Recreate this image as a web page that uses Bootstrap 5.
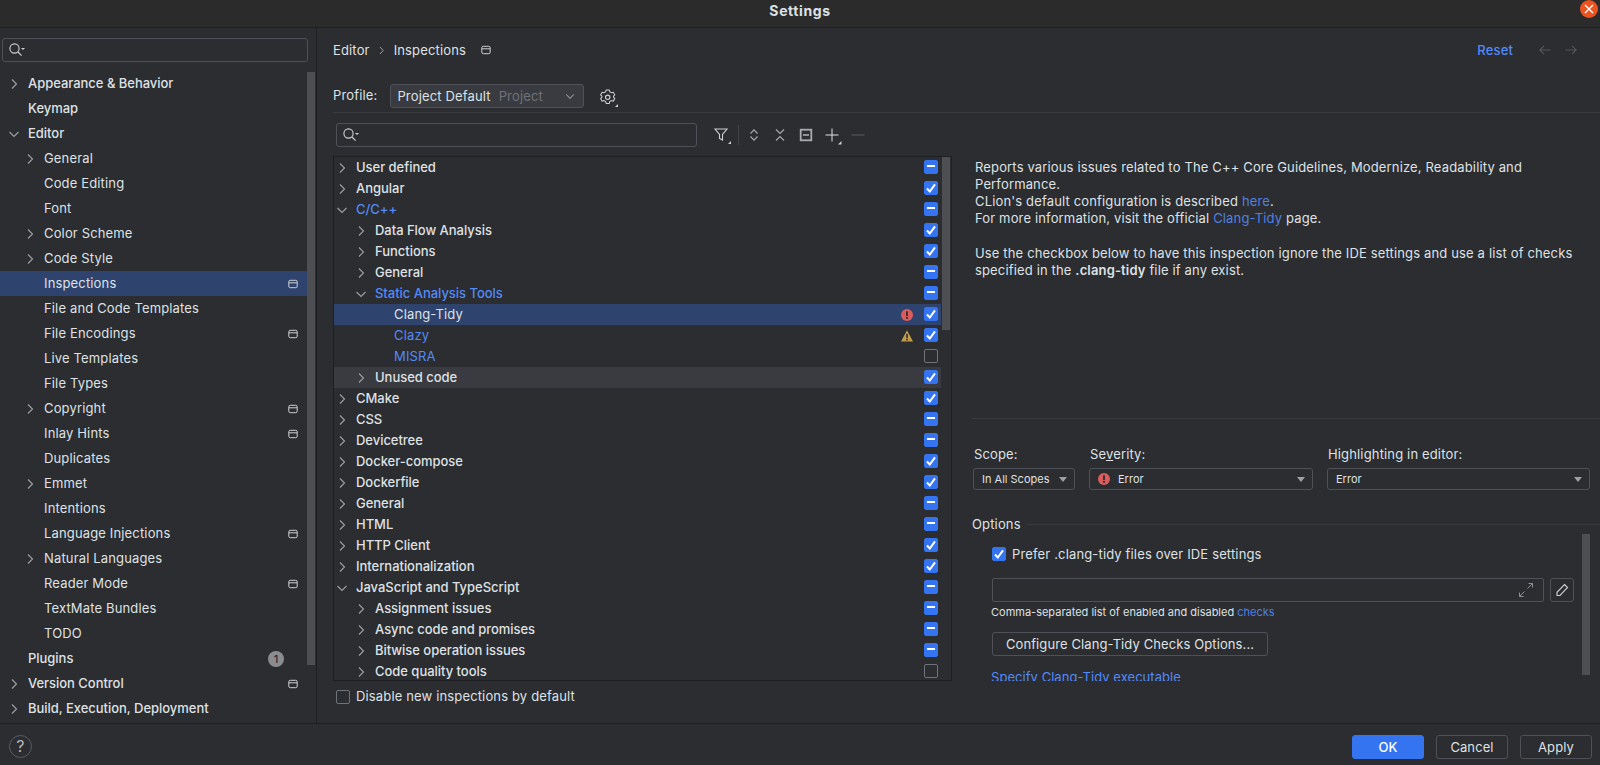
<!DOCTYPE html>
<html>
<head>
	<meta charset="UTF-8">
	<title>Settings</title>
	<link href="https://cdn.jsdelivr.net/npm/bootstrap@5.3.3/dist/css/bootstrap.min.css" rel="stylesheet">
	<script src="https://cdn.jsdelivr.net/npm/bootstrap@5.3.3/dist/js/bootstrap.bundle.min.js"></script>
	<style type="text/css">
		html, body { height: 100%; overflow: hidden; }
		body { background: #2b2d30; color: #dfe1e5; font: 13px/17px Inter, "Liberation Sans", sans-serif; letter-spacing: .15px; }
		a { color: #548af7; text-decoration: none; }
		svg { display: block; flex: none; }
		.ide-shell { height: 765px; }
		.title-bar { height: 28px; padding-bottom: 7px; background: #2b2b2b; border-bottom: 1px solid #1e1f22; font-weight: 700; font-size: 14px; letter-spacing: .6px; }
		.close-dot { position: absolute; right: 2px; top: 0; width: 18px; height: 18px; border-radius: 50%; background: #e95420; }
		.work-area { height: 695px; }
		.side-pane { width: 317px; border-right: 1px solid #1e1f22; }
		.side-search { margin: 10px 8px 9px 2px; }
		.srch-box { height: 24px; border: 1px solid #4e5157; border-radius: 3px; padding-left: 5px; }
		.side-list { height: 650px; overflow: hidden; }
		.side-row { height: 25px; padding-right: 18px; }
		.side-row.active-row { background: #2e436e; margin-right: 8px; padding-right: 10px; }
		.top-item { font-weight: 500; letter-spacing: -.03px; }
		.lvl-s0 { padding-left: 6px; }
		.lvl-s1 { padding-left: 22px; }
		.chev-slot { width: 16px; margin-right: 6px; flex: none; display: flex; justify-content: center; }
		.side-scroll { position: absolute; left: 307px; top: 1px; width: 8px; height: 593px; background: #4e4f52; }
		.count-pill { width: 16px; height: 16px; border-radius: 50%; background: #8a8c90; color: #2b2d30; font-size: 11px; line-height: 16px; text-align: center; margin-right: 14px; }
		.main-pane { min-width: 0; }
		.crumb-row { height: 44px; padding-left: 16px; padding-right: 23px; }
		.crumb-sep { margin: 0 7.5px; }
		.crumb-proj { margin-left: 15px; }
		.reset-link { margin-right: 26px; font-weight: 500; }
		.next-arrow { margin-left: 14px; }
		.profile-row { height: 41px; margin-left: 16px; padding-bottom: 4px; border-bottom: 1px solid #393b40; }
		.profile-combo { width: 194px; height: 24px; margin-left: 13px; padding: 0 7px 0 6px; border: 1px solid #4e5157; border-radius: 3px; background: #393b40; }
		.gear-ico { margin-left: 15px; }
		.dim-text { color: #6f737a; }
		.left-col { width: 635px; padding-left: 16px; flex: none; }
		.tool-row { height: 43px; padding: 10px 0 9px 3px; }
		.tool-search { width: 361px; }
		.tool-btn { width: 26px; display: flex; justify-content: center; }
		.tool-sep { width: 1px; height: 20px; background: #43454a; margin: 0 2px 0 3px; }
		.tree-box { height: 525px; border: 1px solid #1e1f22; overflow: hidden; }
		.tree-row { height: 21px; padding-right: 13px; }
		.tree-row.picked { background: #2e436e; margin-right: 10px; padding-right: 3px; }
		.tree-row.hovered { background: #393b40; margin-right: 10px; padding-right: 3px; }
		.tree-row .ij-box { margin-top: -1px; }
		.lvl-t1 { padding-left: 19px; }
		.lvl-t2 { padding-left: 38px; }
		.blue-text { color: #548af7; }
		.tree-scroll { position: absolute; left: 608px; top: 0; width: 8px; height: 173px; background: #4e4f52; }
		.stat-ico { margin-right: 11px; }
		.form-check-input.ij-box { width: 14px; height: 14px; margin-left: 0; margin-bottom: 0; border: 1px solid #6f737a; border-radius: 2px; background-color: transparent; background-size: 14px 14px; flex: none; }
		.form-check-input.ij-box:checked { background-color: #3574f0; border-color: #3574f0; background-image: url("data:image/svg+xml,%3csvg xmlns='http://www.w3.org/2000/svg' viewBox='0 0 14 14'%3e%3cpath fill='none' stroke='%23fff' stroke-width='2' d='M3 7.500 5.800 10.500 11 3.300'/%3e%3c/svg%3e"); }
		.form-check-input.ij-box:indeterminate { background-color: #3574f0; border-color: #3574f0; background-image: url("data:image/svg+xml,%3csvg xmlns='http://www.w3.org/2000/svg' viewBox='0 0 14 14'%3e%3cpath stroke='%23fff' stroke-width='2' d='M3 6h8'/%3e%3c/svg%3e"); }
		.disable-row { height: 31px; padding-left: 3px; gap: 6px; }
		.disable-row .ij-box, .opt-check .ij-box { margin-top: 0; }
		.right-col { min-width: 0; }
		.desc-block { height: 306px; margin-left: 20px; padding: 46px 20px 0 3px; border-bottom: 1px solid #393b40; }
		.desc-block p { margin: 0; }
		.desc-block a, .opt-help a { color: #5080e0; }
		.desc-gap { margin-top: 18px !important; }
		.scope-labels { height: 22.5px; margin: 26.5px 0 0 22px; }
		.scope-combos { margin-left: 21px; margin-right: 10px; }
		.ij-combo { height: 22px; border: 1px solid #4e5157; border-radius: 3px; padding: 0 7px 0 8px; font-size: 11px; letter-spacing: 0; flex: none; }
		.caret-down { width: 0; height: 0; border-left: 4.5px solid transparent; border-right: 4.5px solid transparent; border-top: 5px solid #9da0a8; }
		.scope-w { width: 102px; }
		.sev-w { width: 224px; margin-left: 14px; }
		.high-w { width: 263px; margin-left: 14px; }
		.options-head { margin: 26px 0 0 20px; gap: 6px; height: 17px; }
		.options-head i { flex: 1; height: 1px; background: #393b40; }
		.options-body { height: 147px; margin-top: 1px; overflow: hidden; padding: 13px 0 0 40px; }
		.opt-scroll { position: absolute; right: 10px; top: 0; width: 8px; height: 141px; background: #4e4f52; }
		.opt-check { gap: 6px; height: 14px; }
		.opt-input { margin-top: 17px; gap: 6px; }
		.opt-field { width: 552px; height: 24px; border: 1px solid #4e5157; border-radius: 2px; padding-right: 9px; }
		.edit-btn { width: 24px; height: 24px; border: 1px solid #4e5157; border-radius: 3px; }
		.opt-help { font-size: 11px; letter-spacing: 0; line-height: 15px; margin: 3px 0 0 -1px; }
		.ij-btn.btn { color: #dfe1e5; background: transparent; border: 1px solid #4e5157; border-radius: 3px; font-size: 13px; letter-spacing: .1px; line-height: 17px; padding: 2px 0; height: 24px; }
		.conf-btn.btn { width: 276px; margin-top: 12px; display: block; }
		.opt-link { margin: 13px 0 0 -1px; letter-spacing: .05px; }
		.foot-bar { height: 42px; border-top: 1px solid #1e1f22; padding: 11px 8px 0 9px; }
		.help-dot { width: 23px; height: 23px; border: 1px solid #5a5d63; border-radius: 50%; font-size: 16px; line-height: 21px; text-align: center; color: #b4b8bf; }
		.foot-bar .ij-btn.btn { width: 72px; margin-left: 12px; }
		.foot-bar .ok-btn.btn { background: #3574f0; border-color: #3574f0; color: #fff; font-weight: 500; }
	</style>
	<script type="text/javascript">
		window.onload = function() {
			// checkbox indeterminate 상태는 속성으로 못 줌
			document.querySelectorAll("input[data-mixed]").forEach(function(box) {
				box.indeterminate = true;
			});
		};
	</script>
</head>
<body>
	<svg width="0" height="0" style="position:absolute">
		<symbol id="ch-r" viewBox="0 0 16 16"><path d="M6 3.500 10.500 8 6 12.500" fill="none" stroke="#9da0a8" stroke-width="1.100"/></symbol>
		<symbol id="ch-d" viewBox="0 0 16 16"><path d="M3.500 6 8 10.500 12.500 6" fill="none" stroke="#9da0a8" stroke-width="1.100"/></symbol>
		<symbol id="proj" viewBox="0 0 10 10"><rect x=".8" y="1.300" width="8.400" height="7.400" rx="1.500" fill="none" stroke="#ced0d6" stroke-width="1"/><path d="M1 3.800h8" stroke="#ced0d6" stroke-width="1"/></symbol>
		<symbol id="mag" viewBox="0 0 18 16"><circle cx="6.500" cy="6.500" r="4.600" fill="none" stroke="#ced0d6" stroke-width="1.100"/><path d="M10 10l3.600 3.600" stroke="#ced0d6" stroke-width="1.100"/><path d="M13 6h4l-2 2z" fill="#ced0d6"/></symbol>
		<symbol id="err" viewBox="0 0 12 12"><circle cx="6" cy="6" r="6" fill="#db5c5c"/><rect x="5.100" y="2.300" width="1.800" height="4.800" fill="#2b2d30"/><rect x="5.100" y="8" width="1.800" height="1.800" fill="#2b2d30"/></symbol>
	</svg>

	<div class="ide-shell d-flex flex-column">
		<div class="title-bar position-relative d-flex align-items-center justify-content-center">
			Settings
			<span class="close-dot d-flex align-items-center justify-content-center">
				<svg width="10" height="10" viewBox="0 0 10 10"><path d="M1 1l8 8M9 1l-8 8" stroke="#fff" stroke-width="1.400"/></svg>
			</span>
		</div>

		<div class="work-area d-flex">
			<div class="side-pane flex-shrink-0">
				<div class="side-search srch-box d-flex align-items-center"><svg width="18" height="16"><use href="#mag"/></svg></div>
				<div class="side-list position-relative">
					<div class="side-row lvl-s0 top-item d-flex align-items-center"><span class="chev-slot"><svg width="16" height="16"><use href="#ch-r"/></svg></span>Appearance &amp; Behavior</div>
					<div class="side-row lvl-s0 top-item d-flex align-items-center"><span class="chev-slot"></span>Keymap</div>
					<div class="side-row lvl-s0 top-item d-flex align-items-center"><span class="chev-slot"><svg width="16" height="16"><use href="#ch-d"/></svg></span>Editor</div>
					<div class="side-row lvl-s1 d-flex align-items-center"><span class="chev-slot"><svg width="16" height="16"><use href="#ch-r"/></svg></span>General</div>
					<div class="side-row lvl-s1 d-flex align-items-center"><span class="chev-slot"></span>Code Editing</div>
					<div class="side-row lvl-s1 d-flex align-items-center"><span class="chev-slot"></span>Font</div>
					<div class="side-row lvl-s1 d-flex align-items-center"><span class="chev-slot"><svg width="16" height="16"><use href="#ch-r"/></svg></span>Color Scheme</div>
					<div class="side-row lvl-s1 d-flex align-items-center"><span class="chev-slot"><svg width="16" height="16"><use href="#ch-r"/></svg></span>Code Style</div>
					<div class="side-row active-row lvl-s1 d-flex align-items-center"><span class="chev-slot"></span>Inspections<svg class="ms-auto" width="10" height="10"><use href="#proj"/></svg></div>
					<div class="side-row lvl-s1 d-flex align-items-center"><span class="chev-slot"></span>File and Code Templates</div>
					<div class="side-row lvl-s1 d-flex align-items-center"><span class="chev-slot"></span>File Encodings<svg class="ms-auto" width="10" height="10"><use href="#proj"/></svg></div>
					<div class="side-row lvl-s1 d-flex align-items-center"><span class="chev-slot"></span>Live Templates</div>
					<div class="side-row lvl-s1 d-flex align-items-center"><span class="chev-slot"></span>File Types</div>
					<div class="side-row lvl-s1 d-flex align-items-center"><span class="chev-slot"><svg width="16" height="16"><use href="#ch-r"/></svg></span>Copyright<svg class="ms-auto" width="10" height="10"><use href="#proj"/></svg></div>
					<div class="side-row lvl-s1 d-flex align-items-center"><span class="chev-slot"></span>Inlay Hints<svg class="ms-auto" width="10" height="10"><use href="#proj"/></svg></div>
					<div class="side-row lvl-s1 d-flex align-items-center"><span class="chev-slot"></span>Duplicates</div>
					<div class="side-row lvl-s1 d-flex align-items-center"><span class="chev-slot"><svg width="16" height="16"><use href="#ch-r"/></svg></span>Emmet</div>
					<div class="side-row lvl-s1 d-flex align-items-center"><span class="chev-slot"></span>Intentions</div>
					<div class="side-row lvl-s1 d-flex align-items-center"><span class="chev-slot"></span>Language Injections<svg class="ms-auto" width="10" height="10"><use href="#proj"/></svg></div>
					<div class="side-row lvl-s1 d-flex align-items-center"><span class="chev-slot"><svg width="16" height="16"><use href="#ch-r"/></svg></span>Natural Languages</div>
					<div class="side-row lvl-s1 d-flex align-items-center"><span class="chev-slot"></span>Reader Mode<svg class="ms-auto" width="10" height="10"><use href="#proj"/></svg></div>
					<div class="side-row lvl-s1 d-flex align-items-center"><span class="chev-slot"></span>TextMate Bundles</div>
					<div class="side-row lvl-s1 d-flex align-items-center"><span class="chev-slot"></span>TODO</div>
					<div class="side-row lvl-s0 top-item d-flex align-items-center"><span class="chev-slot"></span>Plugins<span class="count-pill ms-auto">1</span></div>
					<div class="side-row lvl-s0 top-item d-flex align-items-center"><span class="chev-slot"><svg width="16" height="16"><use href="#ch-r"/></svg></span>Version Control<svg class="ms-auto" width="10" height="10"><use href="#proj"/></svg></div>
					<div class="side-row lvl-s0 top-item d-flex align-items-center"><span class="chev-slot"><svg width="16" height="16"><use href="#ch-r"/></svg></span>Build, Execution, Deployment</div>
					<div class="side-scroll"></div>
				</div>
			</div>

			<div class="main-pane flex-grow-1 d-flex flex-column">
				<div class="crumb-row d-flex align-items-center">
					<span>Editor</span>
					<svg class="crumb-sep" width="9" height="9" viewBox="0 0 9 9"><path d="M3 1l3.200 3.500L3 8" fill="none" stroke="#9da0a8" stroke-width="1"/></svg>
					<span>Inspections</span>
					<svg class="crumb-proj" width="10" height="10"><use href="#proj"/></svg>
					<a class="reset-link ms-auto" href="#">Reset</a>
					<svg width="12" height="12" viewBox="0 0 12 12"><path d="M11.500 6H.8M5 1.800.8 6 5 10.200" fill="none" stroke="#55575c" stroke-width="1.100"/></svg>
					<svg class="next-arrow" width="12" height="12" viewBox="0 0 12 12"><path d="M.5 6h10.700M7 1.800 11.200 6 7 10.200" fill="none" stroke="#55575c" stroke-width="1.100"/></svg>
				</div>
				<div class="profile-row d-flex align-items-end">
					<span class="pb-1">Profile:</span>
					<div class="profile-combo d-flex align-items-center">
						<span>Project Default</span><span class="dim-text ms-2">Project</span>
						<svg class="ms-auto" width="12" height="12" viewBox="0 0 16 16"><path d="M3 6l5 5 5-5" fill="none" stroke="#9da0a8" stroke-width="1.400"/></svg>
					</div>
					<svg class="gear-ico" width="20" height="20" viewBox="0 0 20 20">
						<path d="M8.400 2.600h3.200l.6 2 1.900 1.100 2-.5 1.600 2.800-1.400 1.500v1l1.400 1.500-1.600 2.800-2-.5-1.900 1.100-.6 2H8.400l-.6-2-1.900-1.100-2 .5-1.600-2.800 1.400-1.500v-1L2.300 8l1.600-2.800 2 .5 1.900-1.100z" transform="translate(-.5 -.5) scale(.92)" fill="none" stroke="#ced0d6" stroke-width="1.100"/>
						<circle cx="8.700" cy="9.300" r="2.200" fill="none" stroke="#ced0d6" stroke-width="1.100"/>
						<path d="M19 16v3h-3z" fill="#ced0d6"/>
					</svg>
				</div>

				<div class="d-flex flex-grow-1">
					<div class="left-col">
						<div class="tool-row d-flex align-items-center">
							<div class="tool-search srch-box d-flex align-items-center me-2"><svg width="18" height="16"><use href="#mag"/></svg></div>
							<span class="tool-btn ms-1"><svg width="20" height="20" viewBox="0 0 20 20"><path d="M3 4h12l-4.500 5.500V15l-3-1.500v-4z" fill="none" stroke="#ced0d6" stroke-width="1.100"/><path d="M19 16v3h-3z" fill="#ced0d6"/></svg></span>
							<span class="tool-sep"></span>
							<span class="tool-btn"><svg width="16" height="16" viewBox="0 0 16 16"><path d="M4.500 6.500 8 2.800l3.500 3.700M4.500 9.500 8 13.200l3.500-3.700" fill="none" stroke="#a8abb1" stroke-width="1.100"/></svg></span>
							<span class="tool-btn"><svg width="16" height="16" viewBox="0 0 16 16"><path d="M4 2.500 8 6.500l4-4M4 13.500l4-4 4 4" fill="none" stroke="#a8abb1" stroke-width="1.100"/></svg></span>
							<span class="tool-btn"><svg width="14" height="14" viewBox="0 0 14 14"><rect x="1.700" y="1.700" width="10.600" height="10.600" fill="none" stroke="#a8abb1" stroke-width="1.800"/><path d="M4 7h6" stroke="#a8abb1" stroke-width="1.600"/></svg></span>
							<span class="tool-btn"><svg width="20" height="20" viewBox="0 0 20 20"><path d="M10 3.500v13M3.500 10h13" stroke="#dfe1e5" stroke-width="1"/><path d="M19.500 16v3.500H16z" fill="#ced0d6"/></svg></span>
							<span class="tool-btn"><svg width="16" height="16" viewBox="0 0 16 16"><path d="M1.500 8h13" stroke="#5a5d63" stroke-width="1"/></svg></span>
						</div>
						<div class="tree-box position-relative">
							<div class="tree-row top-item d-flex align-items-center"><span class="chev-slot"><svg width="16" height="16"><use href="#ch-r"/></svg></span>User defined<input class="form-check-input ij-box ms-auto" type="checkbox" data-mixed></div>
							<div class="tree-row top-item d-flex align-items-center"><span class="chev-slot"><svg width="16" height="16"><use href="#ch-r"/></svg></span>Angular<input class="form-check-input ij-box ms-auto" type="checkbox" checked></div>
							<div class="tree-row top-item blue-text d-flex align-items-center"><span class="chev-slot"><svg width="16" height="16"><use href="#ch-d"/></svg></span>C/C++<input class="form-check-input ij-box ms-auto" type="checkbox" data-mixed></div>
							<div class="tree-row lvl-t1 top-item d-flex align-items-center"><span class="chev-slot"><svg width="16" height="16"><use href="#ch-r"/></svg></span>Data Flow Analysis<input class="form-check-input ij-box ms-auto" type="checkbox" checked></div>
							<div class="tree-row lvl-t1 top-item d-flex align-items-center"><span class="chev-slot"><svg width="16" height="16"><use href="#ch-r"/></svg></span>Functions<input class="form-check-input ij-box ms-auto" type="checkbox" checked></div>
							<div class="tree-row lvl-t1 top-item d-flex align-items-center"><span class="chev-slot"><svg width="16" height="16"><use href="#ch-r"/></svg></span>General<input class="form-check-input ij-box ms-auto" type="checkbox" data-mixed></div>
							<div class="tree-row lvl-t1 top-item blue-text d-flex align-items-center"><span class="chev-slot"><svg width="16" height="16"><use href="#ch-d"/></svg></span>Static Analysis Tools<input class="form-check-input ij-box ms-auto" type="checkbox" data-mixed></div>
							<div class="tree-row picked lvl-t2 d-flex align-items-center"><span class="chev-slot"></span>Clang-Tidy<svg class="stat-ico ms-auto" width="12" height="12"><use href="#err"/></svg><input class="form-check-input ij-box" type="checkbox" checked></div>
							<div class="tree-row lvl-t2 blue-text d-flex align-items-center"><span class="chev-slot"></span>Clazy<svg class="stat-ico ms-auto" width="12" height="12" viewBox="0 0 12 12"><path d="M6 .3 12 11.500H0z" fill="#c29c4a"/><rect x="5.200" y="3.800" width="1.600" height="4.200" fill="#2b2d30"/><rect x="5.200" y="8.800" width="1.600" height="1.600" fill="#2b2d30"/></svg><input class="form-check-input ij-box" type="checkbox" checked></div>
							<div class="tree-row lvl-t2 blue-text d-flex align-items-center"><span class="chev-slot"></span>MISRA<input class="form-check-input ij-box ms-auto" type="checkbox"></div>
							<div class="tree-row hovered lvl-t1 top-item d-flex align-items-center"><span class="chev-slot"><svg width="16" height="16"><use href="#ch-r"/></svg></span>Unused code<input class="form-check-input ij-box ms-auto" type="checkbox" checked></div>
							<div class="tree-row top-item d-flex align-items-center"><span class="chev-slot"><svg width="16" height="16"><use href="#ch-r"/></svg></span>CMake<input class="form-check-input ij-box ms-auto" type="checkbox" checked></div>
							<div class="tree-row top-item d-flex align-items-center"><span class="chev-slot"><svg width="16" height="16"><use href="#ch-r"/></svg></span>CSS<input class="form-check-input ij-box ms-auto" type="checkbox" data-mixed></div>
							<div class="tree-row top-item d-flex align-items-center"><span class="chev-slot"><svg width="16" height="16"><use href="#ch-r"/></svg></span>Devicetree<input class="form-check-input ij-box ms-auto" type="checkbox" data-mixed></div>
							<div class="tree-row top-item d-flex align-items-center"><span class="chev-slot"><svg width="16" height="16"><use href="#ch-r"/></svg></span>Docker-compose<input class="form-check-input ij-box ms-auto" type="checkbox" checked></div>
							<div class="tree-row top-item d-flex align-items-center"><span class="chev-slot"><svg width="16" height="16"><use href="#ch-r"/></svg></span>Dockerfile<input class="form-check-input ij-box ms-auto" type="checkbox" checked></div>
							<div class="tree-row top-item d-flex align-items-center"><span class="chev-slot"><svg width="16" height="16"><use href="#ch-r"/></svg></span>General<input class="form-check-input ij-box ms-auto" type="checkbox" data-mixed></div>
							<div class="tree-row top-item d-flex align-items-center"><span class="chev-slot"><svg width="16" height="16"><use href="#ch-r"/></svg></span>HTML<input class="form-check-input ij-box ms-auto" type="checkbox" data-mixed></div>
							<div class="tree-row top-item d-flex align-items-center"><span class="chev-slot"><svg width="16" height="16"><use href="#ch-r"/></svg></span>HTTP Client<input class="form-check-input ij-box ms-auto" type="checkbox" checked></div>
							<div class="tree-row top-item d-flex align-items-center"><span class="chev-slot"><svg width="16" height="16"><use href="#ch-r"/></svg></span>Internationalization<input class="form-check-input ij-box ms-auto" type="checkbox" checked></div>
							<div class="tree-row top-item d-flex align-items-center"><span class="chev-slot"><svg width="16" height="16"><use href="#ch-d"/></svg></span>JavaScript and TypeScript<input class="form-check-input ij-box ms-auto" type="checkbox" data-mixed></div>
							<div class="tree-row lvl-t1 top-item d-flex align-items-center"><span class="chev-slot"><svg width="16" height="16"><use href="#ch-r"/></svg></span>Assignment issues<input class="form-check-input ij-box ms-auto" type="checkbox" data-mixed></div>
							<div class="tree-row lvl-t1 top-item d-flex align-items-center"><span class="chev-slot"><svg width="16" height="16"><use href="#ch-r"/></svg></span>Async code and promises<input class="form-check-input ij-box ms-auto" type="checkbox" data-mixed></div>
							<div class="tree-row lvl-t1 top-item d-flex align-items-center"><span class="chev-slot"><svg width="16" height="16"><use href="#ch-r"/></svg></span>Bitwise operation issues<input class="form-check-input ij-box ms-auto" type="checkbox" data-mixed></div>
							<div class="tree-row lvl-t1 top-item d-flex align-items-center"><span class="chev-slot"><svg width="16" height="16"><use href="#ch-r"/></svg></span>Code quality tools<input class="form-check-input ij-box ms-auto" type="checkbox"></div>
							<div class="tree-scroll"></div>
						</div>
						<div class="disable-row d-flex align-items-center">
							<input class="form-check-input ij-box" type="checkbox">
							<span>Disable new inspections by default</span>
						</div>
					</div>

					<div class="right-col flex-grow-1">
						<div class="desc-block">
							<p>Reports various issues related to The C++ Core Guidelines, Modernize, Readability and Performance.<br>CLion's default configuration is described <a href="#">here</a>.<br>For more information, visit the official <a href="#">Clang-Tidy</a> page.</p>
							<p class="desc-gap">Use the checkbox below to have this inspection ignore the IDE settings and use a list of checks specified in the <b class="fw-semibold">.clang-tidy</b> file if any exist.</p>
						</div>
						<div class="scope-labels d-flex">
							<span class="scope-w">Scope:</span>
							<span class="sev-w">Se<u>v</u>erity:</span>
							<span class="high-w">Highlighting in editor:</span>
						</div>
						<div class="scope-combos d-flex">
							<div class="ij-combo scope-w d-flex align-items-center justify-content-between">In All Scopes<span class="caret-down"></span></div>
							<div class="ij-combo sev-w d-flex align-items-center"><svg class="me-2" width="12" height="12"><use href="#err"/></svg>Error<span class="caret-down ms-auto"></span></div>
							<div class="ij-combo high-w d-flex align-items-center justify-content-between">Error<span class="caret-down"></span></div>
						</div>
						<div class="options-head d-flex align-items-center"><span>Options</span><i></i></div>
						<div class="options-body position-relative">
							<div class="opt-check d-flex align-items-center">
								<input class="form-check-input ij-box" type="checkbox" checked>
								<span>Prefer .clang-tidy files over IDE settings</span>
							</div>
							<div class="opt-input d-flex">
								<div class="opt-field d-flex align-items-center justify-content-end">
									<svg width="16" height="16" viewBox="0 0 16 16"><path d="M9.500 6.500 14.500 1.500M10.500 1.500h4v4M6.500 9.500l-5 5M1.500 10.500v4h4" fill="none" stroke="#8c8f95" stroke-width="1"/></svg>
								</div>
								<div class="edit-btn d-flex align-items-center justify-content-center">
									<svg width="14" height="14" viewBox="0 0 14 14"><path d="M9.500 1.500 12.500 4.500 5 12.500H2V9.300z" fill="none" stroke="#ced0d6" stroke-width="1.100"/></svg>
								</div>
							</div>
							<div class="opt-help">Comma-separated list of enabled and disabled <a href="#">checks</a></div>
							<button type="button" class="btn ij-btn conf-btn">Configure Clang-Tidy Checks Options...</button>
							<div class="opt-link"><a href="#">Specify Clang-Tidy executable</a></div>
							<div class="opt-scroll"></div>
						</div>
					</div>
				</div>
			</div>
		</div>

		<div class="foot-bar d-flex align-items-start">
			<span class="help-dot">?</span>
			<button type="button" class="btn ij-btn ok-btn ms-auto">OK</button>
			<button type="button" class="btn ij-btn">Cancel</button>
			<button type="button" class="btn ij-btn">Apply</button>
		</div>
	</div>
</body>
</html>
